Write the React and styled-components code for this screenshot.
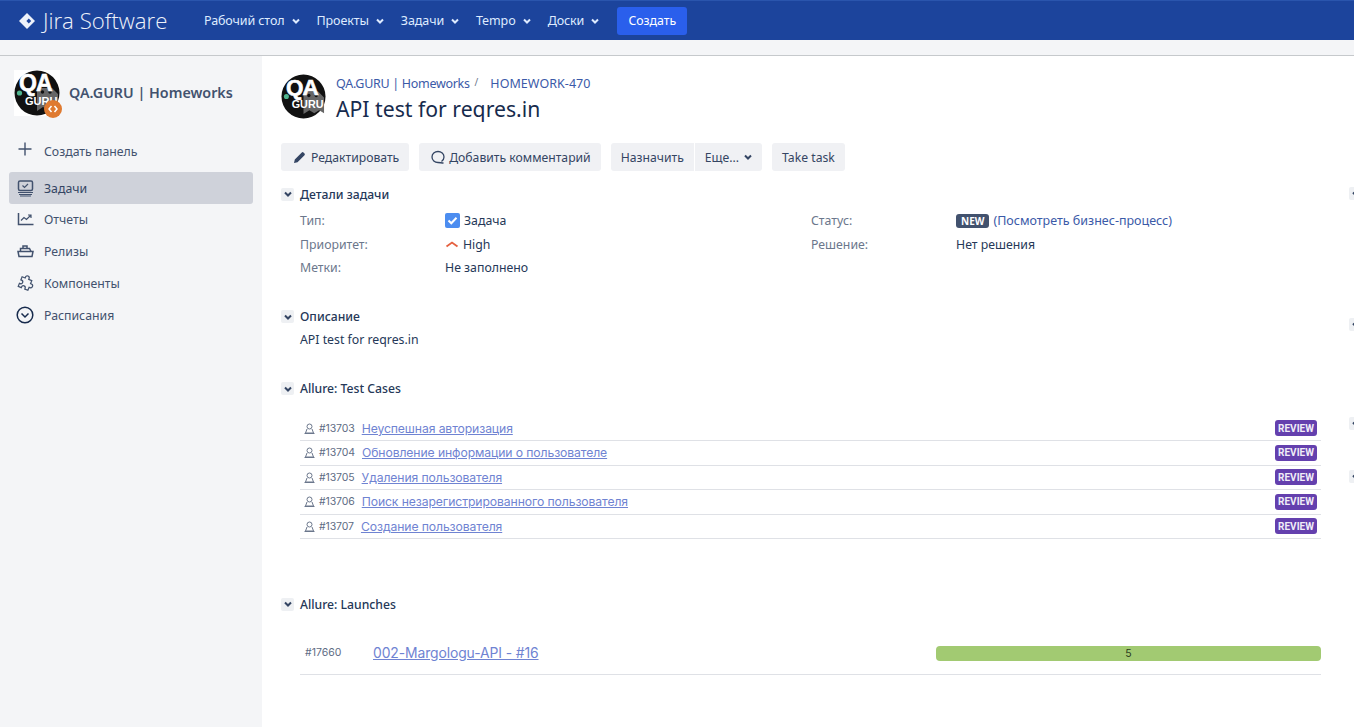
import { createGlobalStyle } from 'styled-components'
import styled from 'styled-components'

const GlobalStyle = createGlobalStyle`
  html, body {
    margin: 0;
    padding: 0;
    height: 100%;
    overflow: hidden;
    background: #fff;
    font-family: "Noto Sans", "Open Sans", sans-serif;
    font-size: 12.3px;
    color: #172b4d;
  }
  * { box-sizing: border-box; }
`

const Page = styled.div`
  width: 1354px;
  height: 727px;
  overflow: hidden;
  display: flex;
  flex-direction: column;
  position: relative;
`

const Header = styled.header`
  height: 40px;
  flex: none;
  background: #1c449c;
  border-top: 1px solid #2a55ad;
  display: flex;
  align-items: center;
  padding-left: 19px;
  color: #deebff;
`

const Brand = styled.div`
  display: flex;
  align-items: center;
  gap: 8px;
  width: 185px;
  flex: none;
  font-family: "Open Sans", sans-serif;
  font-size: 22.2px;
  font-weight: 300;
  letter-spacing: 0;
  color: #eef2fa;
`

const Nav = styled.nav`
  display: flex;
  align-items: center;
  gap: 17px;
`

const NavItem = styled.div`
  display: flex;
  align-items: center;
  gap: 7px;
  font-size: 12.5px;
  letter-spacing: -0.1px;
`

const CreateButton = styled.div`
  width: 70px;
  height: 28px;
  margin-left: 18px;
  border-radius: 3px;
  background: #2a5fec;
  color: #fff;
  font-size: 12.3px;
  display: flex;
  align-items: center;
  justify-content: center;
`

const Strip = styled.div`
  height: 16px;
  flex: none;
  background: #f4f5f7;
  border-bottom: 1px solid #c6c9cc;
`

const Body = styled.div`
  flex: 1;
  display: flex;
  min-height: 0;
`

const Sidebar = styled.aside`
  width: 262px;
  flex: none;
  background: #f4f5f7;
  padding: 14px 9px 0;
`

const Project = styled.div`
  display: flex;
  align-items: center;
  gap: 9px;
  padding-left: 5px;
  height: 46px;
  position: relative;
`

const ProjectName = styled.div`
  font-size: 14.3px;
  font-weight: 600;
  color: #42526e;
  padding-bottom: 2px;
`

const Badge = styled.span`
  position: absolute;
  left: 35px;
  top: 30px;
  width: 18px;
  height: 18px;
  border-radius: 50%;
  background: #df7a30;
  display: flex;
  align-items: center;
  justify-content: center;
`

const SideList = styled.nav`
  margin-top: 19px;
  display: flex;
  flex-direction: column;
`

const CreatePanel = styled.div`
  height: 32px;
  display: flex;
  align-items: center;
  gap: 10px;
  padding-left: 7px;
  margin-bottom: 5px;
  color: #42526e;
`

const SideItem = styled.div`
  height: 32px;
  display: flex;
  align-items: center;
  gap: 10px;
  padding-left: 7px;
  border-radius: 3px;
  margin-bottom: ${p => (p.$active ? '-1px' : '0')};
  color: ${p => (p.$active ? '#344563' : '#42526e')};
  background: ${p => (p.$active ? '#cfd2da' : 'transparent')};
`

const IconSlot = styled.span`
  width: 18px;
  height: 18px;
  margin-bottom: ${p => p.$lift || 0}px;
  display: flex;
  align-items: center;
  justify-content: center;
  flex: none;
`

const Content = styled.main`
  flex: 1;
  position: relative;
  padding: 15px 33px 0 19px;
  min-width: 0;
`

const IssueHead = styled.div`
  display: flex;
  gap: 10px;
  height: 57px;
`

const HeadLogo = styled.div`
  margin-top: 3px;
  height: 45px;
`

const Breadcrumbs = styled.div`
  display: flex;
  align-items: baseline;
  margin-top: 4px;
  font-size: 12.5px;
  color: #3b5aa8;
`

const Crumb = styled.span`
  letter-spacing: -0.3px;
`

const Slash = styled.span`
  margin: 0 12px 0 5px;
  font-size: 10px;
  color: #6b778c;
  position: relative;
  top: -2px;
`

const IssueKey = styled.span`
  letter-spacing: 0.05px;
`

const Title = styled.h1`
  margin: 3px 0 0;
  font-size: 21.2px;
  font-weight: 400;
  line-height: 28px;
  color: #172b4d;
`

const Toolbar = styled.div`
  display: flex;
  margin-top: 15px;
  height: 28px;
  font-size: 12.2px;
`

const ToolButton = styled.div`
  height: 28px;
  display: flex;
  align-items: center;
  gap: ${p => p.$iconGap || 5}px;
  padding: 0 10px 0 ${p => p.$left || 10}px;
  margin-right: ${p => p.$gap ?? 10}px;
  background: #f0f1f4;
  border-radius: ${p => p.$radius || '3px'};
  color: #344563;
`

const Section = styled.section`
  margin-top: ${p => p.$top}px;
`

const SectionHead = styled.div`
  display: flex;
  align-items: center;
  gap: 6px;
  height: 20px;
  font-size: 12.2px;
  font-weight: 500;
  color: #253858;
`

const Toggle = styled.span`
  width: 13px;
  height: 13px;
  border-radius: 2px;
  background: #eef0f3;
  display: flex;
  align-items: center;
  justify-content: center;
  flex: none;
`

const EdgeToggle = styled(Toggle)`
  position: absolute;
  left: 1087px;
  top: ${p => p.$top}px;
`

const Details = styled.div`
  display: grid;
  grid-template-columns: 145px 366px 145px 1fr;
  grid-auto-rows: 23.5px;
  margin: 5px 0 0 19px;
  align-items: center;
`

const Label = styled.div`
  color: #6b778c;
`

const Value = styled.div`
  display: flex;
  align-items: center;
  gap: 4px;
  color: #253858;
`

const Lozenge = styled.span`
  height: 14px;
  padding: 0 5px;
  border-radius: 3px;
  background: #42526e;
  color: #fff;
  font-size: 10px;
  font-weight: 700;
  line-height: 14px;
`

const WorkflowLink = styled.span`
  color: #3b5aa8;
  font-size: 12.5px;
`

const Description = styled.p`
  margin: 4px 0 0 19px;
  line-height: 17px;
  color: #253858;
`

const CaseList = styled.div`
  margin: 18px 0 0 19px;
`

const CaseRow = styled.div`
  height: 24.5px;
  display: flex;
  align-items: center;
  padding: 0 4px;
  border-bottom: 1px solid #dfe1e6;
`

const CaseId = styled.span`
  font-size: 10.5px;
  color: #5e6c84;
  margin: 0 7px 0 4px;
  font-family: "Inter", sans-serif;
  letter-spacing: -0.1px;
`

const CaseLink = styled.span`
  color: #6f83d2;
  text-decoration: underline;
  font-size: 12.2px;
  font-family: "Inter", sans-serif;
  flex: 1;
  letter-spacing: -0.1px;
`

const ReviewTag = styled.span`
  width: 42px;
  height: 16px;
  border-radius: 3px;
  background: #6440ae;
  color: #f0edf7;
  font-family: "Roboto", sans-serif;
  font-size: 10px;
  font-weight: 700;
  display: flex;
  align-items: center;
  justify-content: center;
`

const LaunchRow = styled.div`
  margin: 17px 0 0 19px;
  height: 44px;
  display: flex;
  align-items: center;
  padding-left: 5px;
  border-bottom: 1px solid #dfe1e6;
`

const LaunchId = styled.span`
  width: 68px;
  flex: none;
  font-size: 10.5px;
  color: #5e6c84;
  font-family: "Inter", sans-serif;
`

const LaunchLink = styled.span`
  width: 563px;
  flex: none;
  color: #6f83d2;
  text-decoration: underline;
  font-size: 13.9px;
  font-family: "Inter", sans-serif;
  letter-spacing: -0.1px;
`

const ResultBar = styled.div`
  flex: 1;
  height: 15px;
  margin-top: 2px;
  border-radius: 4px;
  background: #a2ca72;
  color: #2b3a1c;
  font-size: 10.5px;
  font-family: "Inter", sans-serif;
  display: flex;
  align-items: center;
  justify-content: center;
`

const Chevron = ({ size = 8, color = '#deebff', width = 2 }) => (
  <svg width={size} height={size} viewBox="0 0 8 8" fill="none">
    <path d="M1 2.5 4 5.5 7 2.5" stroke={color} strokeWidth={width} />
  </svg>
)

const SectionTitle = ({ children }) => (
  <SectionHead>
    <Toggle><Chevron color="#344563" /></Toggle>
    {children}
  </SectionHead>
)

const JiraMark = () => (
  <svg width="16" height="16" viewBox="0 0 16 16">
    <path d="M8 0 16 8 8 16 0 8Z" fill="#eef2fa" />
    <path d="M9.800 5.600 12.200 8 9.800 10.400 7.400 8Z" fill="#1c449c" />
  </svg>
)

const QaLogo = ({ size }) => (
  <svg width={size} height={size} viewBox="0 0 46 46">
    <rect width="46" height="46" fill="#fff" />
    <circle cx="23" cy="23" r="22.500" fill="#111" />
    <path d="M23 18h15l6 6v16l-5-3-5 3-5-3-6 4Z" fill="#666" />
    <circle cx="28.500" cy="22" r="1.700" fill="#111" />
    <circle cx="36" cy="22" r="1.700" fill="#111" />
    <circle cx="5.500" cy="23" r="2.600" fill="#4fb58f" />
    <text x="5" y="21" fontFamily="Liberation Sans, sans-serif" fontWeight="700" fontSize="23" fill="#fff" stroke="#fff" strokeWidth="0.600" letterSpacing="-1">QA</text>
    <text x="11" y="35" fontFamily="Liberation Sans, sans-serif" fontWeight="700" fontSize="11" fill="#fff">GURU</text>
  </svg>
)

const stroke = { fill: 'none', stroke: '#42526e', strokeWidth: 1.500 }

const BoardIcon = () => (
  <svg width="17" height="17" viewBox="0 0 17 17" {...stroke}>
    <rect x="1.500" y="1" width="14" height="9.500" rx="1.500" />
    <path d="M5.500 5.500 7.500 7.500 11 4" strokeWidth="1.200" />
    <path d="M1 12.500h15M2 14.500h13M3 16h11" strokeWidth="1.200" />
  </svg>
)
const ChartIcon = () => (
  <svg width="17" height="14" viewBox="0 0 17 14" {...stroke}>
    <path d="M1.500 1v11.500h15" />
    <path d="M4 8.500 7 5.500 9.500 7.500 13.500 3.500M11 3h3v3" strokeWidth="1.200" />
  </svg>
)
const ShipIcon = () => (
  <svg width="17" height="14" viewBox="0 0 17 14" {...stroke}>
    <path d="M1 7.500h15l-1 5H2Z" />
    <path d="M3.500 7.500V4.500h9l1.500 3M6 4.500V2h4v2.500" />
  </svg>
)
const PuzzleIcon = () => (
  <svg width="19" height="19" viewBox="0 0 19 19" {...stroke} strokeWidth="1.300">
    <path
      transform="rotate(22 9.500 9.500)"
      d="M7.500 3a2 2 0 0 1 4 0v1h3.500v3.500h1a2 2 0 0 1 0 4h-1V15h-3.500v-.8a2 2 0 0 0-4 0v.8H4v-3.500h.8a2 2 0 0 0 0-4H4V4h3.500Z"
    />
  </svg>
)
const ClockIcon = () => (
  <svg width="18" height="18" viewBox="0 0 18 18" fill="none" stroke="#172b4d" strokeWidth="1.500">
    <circle cx="9" cy="9" r="7.800" />
    <path d="M5.500 7.500 9 11 12.500 7.500" />
  </svg>
)
const PlusIcon = () => (
  <svg width="14" height="14" viewBox="0 0 14 14" fill="none" stroke="#42526e" strokeWidth="1.400">
    <path d="M7 0.500v13M0.500 7h13" />
  </svg>
)
const PencilIcon = () => (
  <svg width="13" height="13" viewBox="0 0 13 13">
    <path d="M1 12 1.800 8.500 8.800 1.500a1.200 1.200 0 0 1 1.700 0l1 1a1.200 1.200 0 0 1 0 1.700L4.500 11.200Z" fill="#344563" />
  </svg>
)
const CommentIcon = () => (
  <svg width="14" height="14" viewBox="0 0 14 14" fill="none" stroke="#344563" strokeWidth="1.300">
    <path d="M10.500 11.500C12 10.500 13 9 13 7c0-3.200-2.700-5.500-6-5.500S1 3.800 1 7s2.700 5.500 6 5.500c1.500 0 4 .5 5.500.5" />
  </svg>
)
const TaskIcon = () => (
  <svg width="15" height="15" viewBox="0 0 15 15">
    <rect width="15" height="15" rx="2" fill="#4c8df0" />
    <path d="M3.500 7.500 6.300 10.300 11.500 4.800" fill="none" stroke="#fff" strokeWidth="2" />
  </svg>
)
const HighIcon = () => (
  <svg width="14" height="9" viewBox="0 0 14 9" fill="none" stroke="#e5603f" strokeWidth="1.800">
    <path d="M1.500 6.500 7 2.500 12.500 6.500" />
  </svg>
)
const ManualIcon = () => (
  <svg width="11" height="11" viewBox="0 0 11 11" fill="none" stroke="#6b778c" strokeWidth="1">
    <circle cx="5.500" cy="3.500" r="2.500" />
    <path d="M3 6 1.500 10h8L8 6M0.500 10.500h10" />
  </svg>
)

const NAV = ['Рабочий стол', 'Проекты', 'Задачи', 'Tempo', 'Доски']

const CASES = [
  ['#13703', 'Неуспешная авторизация'],
  ['#13704', 'Обновление информации о пользователе'],
  ['#13705', 'Удаления пользователя'],
  ['#13706', 'Поиск незарегистрированного пользователя'],
  ['#13707', 'Создание пользователя'],
]

const App = () => {
  return (
    <Page>
      <GlobalStyle />
      <Header>
        <Brand><JiraMark />Jira Software</Brand>
        <Nav>
          {NAV.map(item => (
            <NavItem key={item}>{item}<Chevron /></NavItem>
          ))}
        </Nav>
        <CreateButton>Создать</CreateButton>
      </Header>
      <Strip />
      <Body>
        <Sidebar>
          <Project>
            <QaLogo size={46} />
            <ProjectName>QA.GURU | Homeworks</ProjectName>
            <Badge>
              <svg width="10" height="8" viewBox="0 0 10 8" fill="none" stroke="#fff" strokeWidth="1.500">
                <path d="M3.500 1 1 4l2.500 3M6.500 1 9 4 6.500 7" />
              </svg>
            </Badge>
          </Project>
          <SideList>
            <CreatePanel><IconSlot $lift={5}><PlusIcon /></IconSlot>Создать панель</CreatePanel>
            <SideItem $active><IconSlot><BoardIcon /></IconSlot>Задачи</SideItem>
            <SideItem><IconSlot><ChartIcon /></IconSlot>Отчеты</SideItem>
            <SideItem><IconSlot><ShipIcon /></IconSlot>Релизы</SideItem>
            <SideItem><IconSlot><PuzzleIcon /></IconSlot>Компоненты</SideItem>
            <SideItem><IconSlot><ClockIcon /></IconSlot>Расписания</SideItem>
          </SideList>
        </Sidebar>
        <Content>
          <IssueHead>
            <HeadLogo><QaLogo size={45} /></HeadLogo>
            <div>
              <Breadcrumbs><Crumb>QA.GURU | Homeworks</Crumb><Slash>/</Slash><IssueKey>HOMEWORK-470</IssueKey></Breadcrumbs>
              <Title>API test for reqres.in</Title>
            </div>
          </IssueHead>
          <Toolbar>
            <ToolButton $left={12}><PencilIcon />Редактировать</ToolButton>
            <ToolButton $left={12} $iconGap={4}><CommentIcon />Добавить комментарий</ToolButton>
            <ToolButton $gap={1} $radius="3px 0 0 3px">Назначить</ToolButton>
            <ToolButton $iconGap={5} $radius="0 3px 3px 0">Еще...<Chevron color="#344563" /></ToolButton>
            <ToolButton>Take task</ToolButton>
          </Toolbar>
          <Section $top={13}>
            <SectionTitle>Детали задачи</SectionTitle>
            <Details>
              <Label>Тип:</Label>
              <Value><TaskIcon />Задача</Value>
              <Label>Статус:</Label>
              <Value><Lozenge>NEW</Lozenge><WorkflowLink>(Посмотреть бизнес-процесс)</WorkflowLink></Value>
              <Label>Приоритет:</Label>
              <Value><HighIcon />High</Value>
              <Label>Решение:</Label>
              <Value>Нет решения</Value>
              <Label>Метки:</Label>
              <Value>Не заполнено</Value>
            </Details>
          </Section>
          <Section $top={27}>
            <SectionTitle>Описание</SectionTitle>
            <Description>API test for reqres.in</Description>
          </Section>
          <Section $top={31}>
            <SectionTitle>Allure: Test Cases</SectionTitle>
            <CaseList>
              {CASES.map(([id, name]) => (
                <CaseRow key={id}>
                  <ManualIcon />
                  <CaseId>{id}</CaseId>
                  <CaseLink>{name}</CaseLink>
                  <ReviewTag>REVIEW</ReviewTag>
                </CaseRow>
              ))}
            </CaseList>
          </Section>
          <Section $top={55}>
            <SectionTitle>Allure: Launches</SectionTitle>
            <LaunchRow>
              <LaunchId>#17660</LaunchId>
              <LaunchLink>002-Margologu-API - #16</LaunchLink>
              <ResultBar>5</ResultBar>
            </LaunchRow>
          </Section>
          <EdgeToggle $top={131}><Chevron color="#344563" /></EdgeToggle>
          <EdgeToggle $top={262}><Chevron color="#344563" /></EdgeToggle>
          <EdgeToggle $top={361}><Chevron color="#344563" /></EdgeToggle>
          <EdgeToggle $top={414}><Chevron color="#344563" /></EdgeToggle>
        </Content>
      </Body>
    </Page>
  )
}

export default App
